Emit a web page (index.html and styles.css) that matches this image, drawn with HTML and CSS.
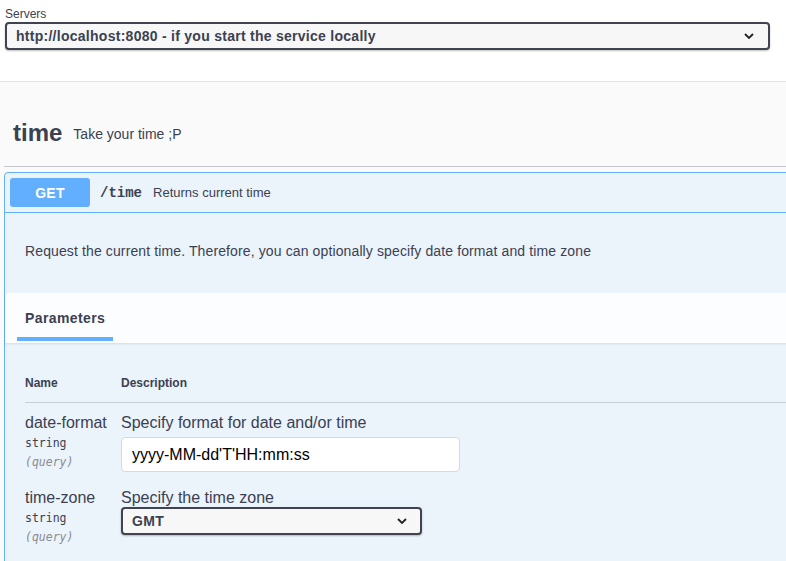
FILE: index.html
```html
<!DOCTYPE html>
<html lang="en">
<head>
<meta charset="utf-8">
<title>Swagger UI</title>
<link rel="stylesheet" href="styles.css">
</head>
<body>
<div class="page">
  <section class="scheme">
    <div class="servers-title">Servers</div>
    <div class="select server-select">
      <span>http://localhost:8080 - if you start the service locally</span>
      <svg class="chev" width="10" height="6" viewBox="0 0 10 6"><path d="M1 1 L5 5 L9 1" fill="none" stroke="#222" stroke-width="1.8"/></svg>
    </div>
  </section>
  <div class="content">
    <h3 class="tag"><span class="tag-name">time</span><small class="tag-desc">Take your time ;P</small></h3>
    <div class="opblock">
      <div class="summary">
        <span class="method">GET</span>
        <span class="path">/time</span>
        <span class="summary-desc">Returns current time</span>
      </div>
      <div class="description">Request the current time. Therefore, you can optionally specify date format and time zone</div>
      <div class="section-header">
        <div class="tab">Parameters</div>
      </div>
      <div class="params">
        <div class="prow phead">
          <div>Name</div>
          <div>Description</div>
        </div>
        <div class="prow">
          <div class="pname">
            <div class="name">date-format</div>
            <div class="type">string</div>
            <div class="in">(query)</div>
          </div>
          <div class="pdesc">
            <div class="desc">Specify format for date and/or time</div>
            <input class="text-input" type="text" value="yyyy-MM-dd'T'HH:mm:ss">
          </div>
        </div>
        <div class="prow">
          <div class="pname">
            <div class="name">time-zone</div>
            <div class="type">string</div>
            <div class="in">(query)</div>
          </div>
          <div class="pdesc">
            <div class="desc">Specify the time zone</div>
            <div class="select tz-select">
              <span>GMT</span>
              <svg class="chev" width="10" height="6" viewBox="0 0 10 6"><path d="M1 1 L5 5 L9 1" fill="none" stroke="#222" stroke-width="1.8"/></svg>
            </div>
          </div>
        </div>
      </div>
    </div>
  </div>
</div>
</body>
</html>
```

FILE: styles.css
```css
html, body {
  margin: 0;
  padding: 0;
  overflow: hidden;
  background: #fafafa;
}
body {
  font-family: "Liberation Sans", Arial, sans-serif;
  color: #3b4151;
}
.page {
  width: 1100px;
}
.scheme {
  background: #fff;
  padding: 7px 0 31px 5px;
  border-bottom: 1px solid #e3e3e3;
}
.servers-title {
  font-size: 12px;
  line-height: 15px;
  color: #3b4151;
}
.select {
  box-sizing: border-box;
  display: flex;
  align-items: center;
  justify-content: space-between;
  border: 2px solid #41444e;
  border-radius: 4px;
  background: #f7f7f7;
  box-shadow: 0 1px 2px 0 rgba(0, 0, 0, 0.25);
  font-size: 14px;
  font-weight: 700;
  color: #3b4151;
}
.server-select {
  width: 765px;
  height: 28px;
  padding: 0 14px 0 9px;
  letter-spacing: 0.27px;
}
.chev {
  display: block;
}
.content {
  padding-left: 4px;
}
.tag {
  margin: 0;
  padding: 33px 0 15px 9px;
  display: flex;
  align-items: center;
  border-bottom: 1px solid #c6c8cd;
  font-weight: 400;
}
.tag-name {
  font-size: 24px;
  font-weight: 700;
  line-height: 36px;
}
.tag-desc {
  font-size: 14px;
  margin-left: 11px;
  line-height: 18px;
  padding-top: 1px;
}
.opblock {
  margin-top: 5px;
  border: 1px solid #61affe;
  border-radius: 4px;
  background: #ebf3fb;
  height: 600px;
}
.summary {
  display: flex;
  align-items: center;
  padding: 5px;
  border-bottom: 1px solid #61affe;
}
.method {
  width: 80px;
  height: 29px;
  display: flex;
  align-items: center;
  justify-content: center;
  background: #61affe;
  border-radius: 3px;
  color: #fff;
  font-size: 14px;
  font-weight: 700;
  letter-spacing: 0.3px;
}
.path {
  margin-left: 10px;
  font-family: "Liberation Mono", "Courier New", monospace;
  font-weight: 700;
  font-size: 14px;
  color: #3b4151;
}
.summary-desc {
  margin-left: 11px;
  font-size: 13px;
}
.description {
  padding: 29px 20px 32px;
  font-size: 14px;
  line-height: 19px;
  letter-spacing: 0.12px;
}
.section-header {
  display: flex;
  height: 50px;
  box-sizing: border-box;
  padding-left: 12px;
  background: rgba(255, 255, 255, 0.8);
  box-shadow: 0 1px 2px rgba(0, 0, 0, 0.1);
}
.tab {
  padding: 15px 8px 9px;
  border-bottom: 4px solid #61affe;
  font-size: 14px;
  font-weight: 700;
  line-height: 20px;
  letter-spacing: 0.4px;
  align-self: flex-start;
}
.params {
  padding: 0 20px;
}
.prow {
  display: grid;
  grid-template-columns: 96px 1fr;
  padding: 10px 0 6px;
}
.phead {
  padding: 33px 0 11px;
  font-size: 12px;
  font-weight: 700;
  line-height: 15px;
  border-bottom: 1px solid #c8ced8;
}
.name {
  font-size: 16px;
  line-height: 20px;
}
.type {
  font-family: "DejaVu Sans Mono", "Liberation Mono", monospace;
  font-size: 11.5px;
  line-height: 20px;
  font-weight: 400;
  color: #3b4151;
}
.in {
  font-family: "DejaVu Sans Mono", "Liberation Mono", monospace;
  font-size: 11.5px;
  line-height: 18px;
  font-style: italic;
  color: #8a8d94;
}
.desc {
  font-size: 16px;
  line-height: 19px;
}
.text-input {
  display: block;
  box-sizing: border-box;
  margin-top: 5px;
  width: 339px;
  height: 35px;
  padding: 0 10px;
  border: 1px solid #d9d9d9;
  border-radius: 4px;
  background: #fff;
  font-family: "Liberation Sans", Arial, sans-serif;
  font-size: 16px;
  color: #000;
  outline: none;
}
.tz-select {
  width: 301px;
  height: 28px;
  padding: 0 13px 0 9px;
  letter-spacing: 0.3px;
}
```
